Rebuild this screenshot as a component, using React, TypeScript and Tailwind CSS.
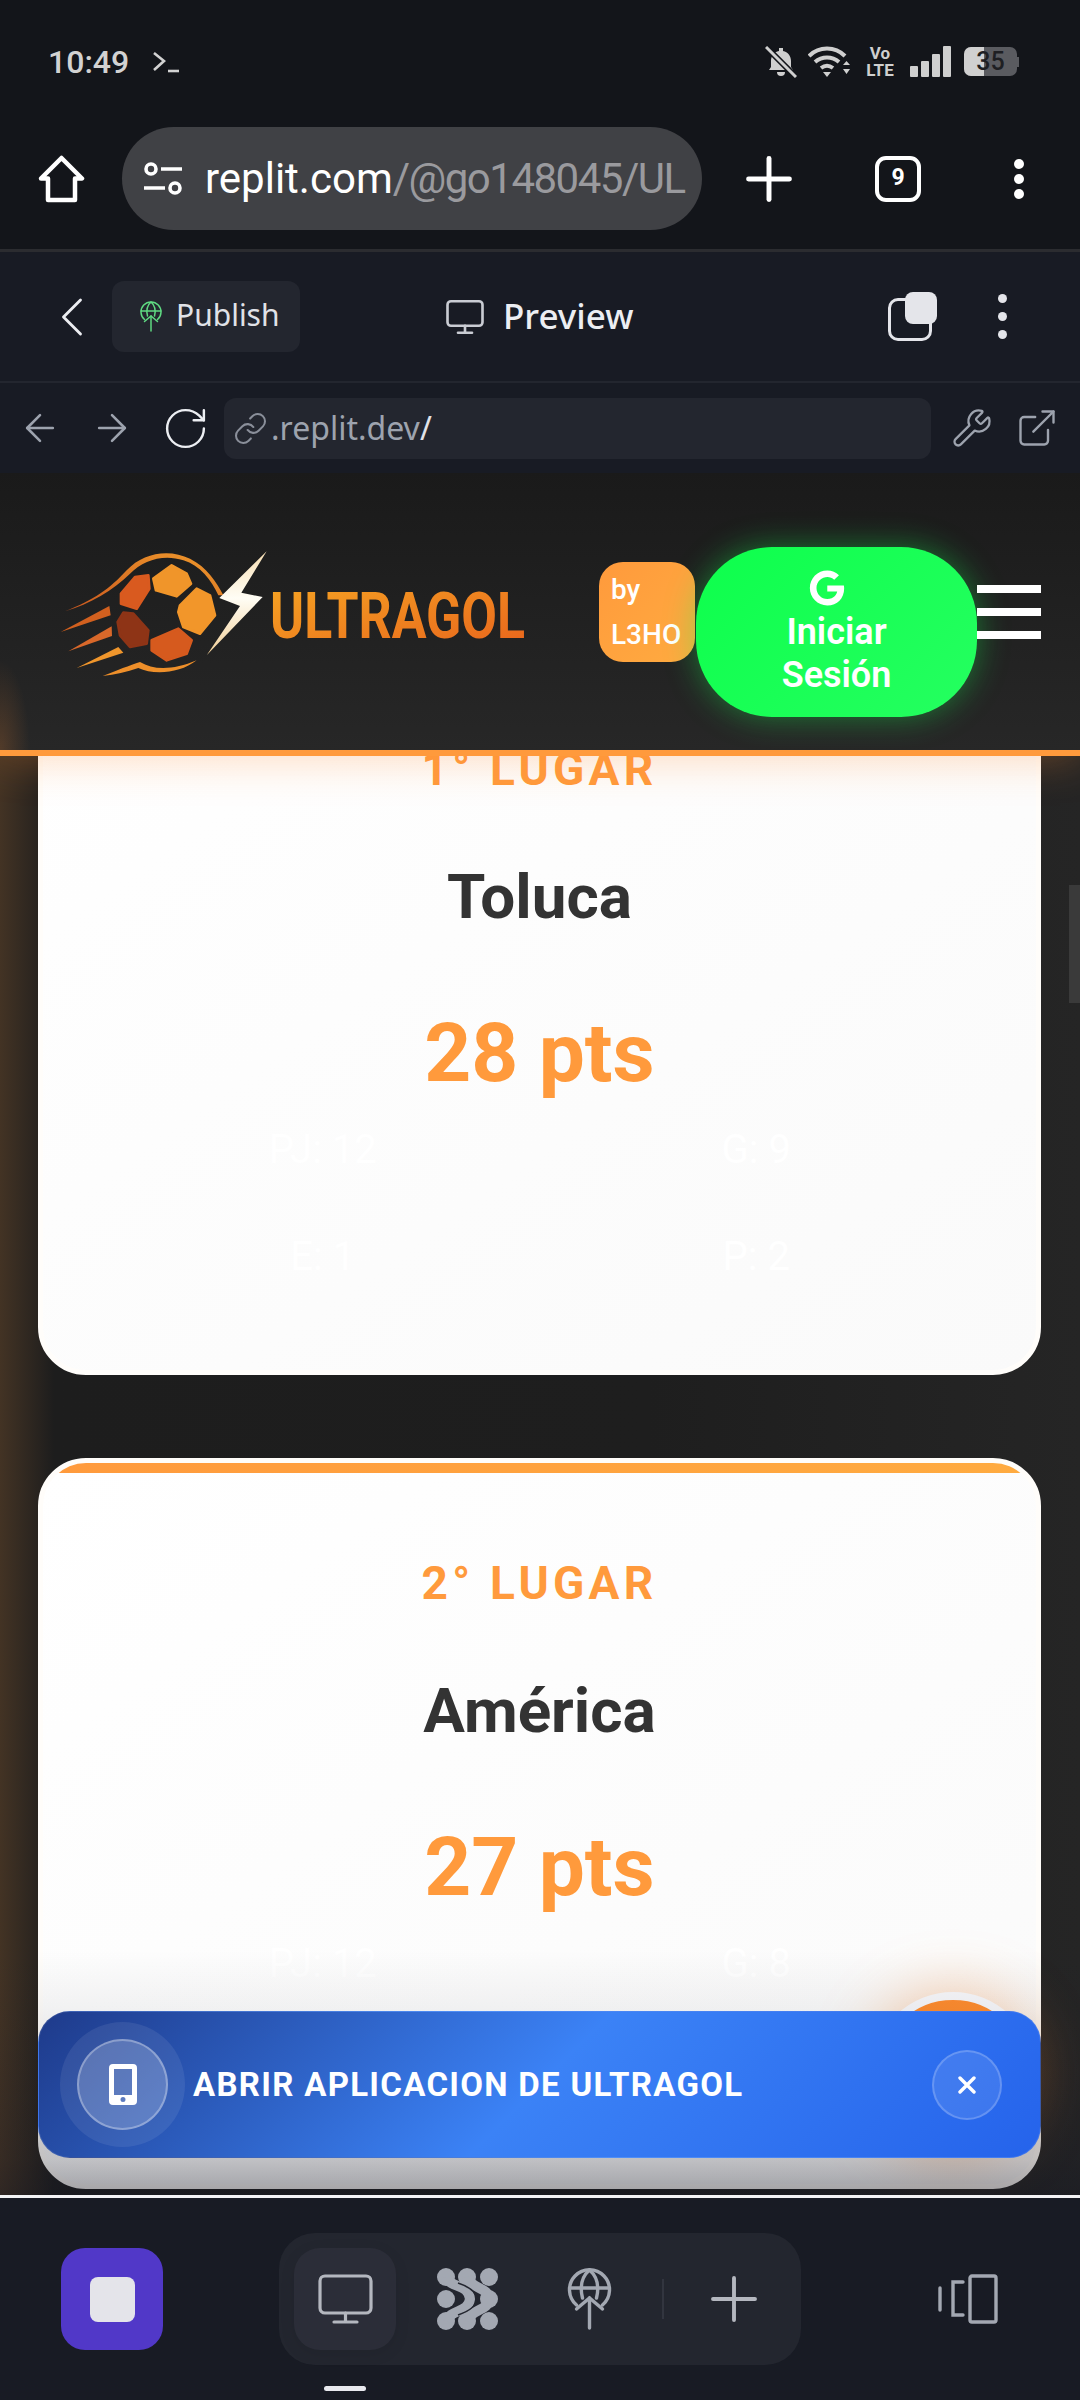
import { ArrowLeft, ArrowRight, ChevronLeft, ExternalLink, Link, Monitor, Plus, RotateCw, Wrench } from "lucide-react";
import { FaGoogle } from "react-icons/fa";

const cards = [
  { place: "1° LUGAR", team: "Toluca", pts: "28 pts", stats: ["PJ: 12", "G: 9", "E: 1", "P: 2"] },
  { place: "2° LUGAR", team: "América", pts: "27 pts", stats: ["PJ: 12", "G: 8"] },
];

function GlobeUp({ color, width, className }: { color: string; width: number; className?: string }) {
  return (
    <svg viewBox="0 0 44 62" className={className} fill="none" stroke={color} strokeWidth={width} strokeLinecap="round">
      <path d="M9 37A20 20 0 1 1 35 37" />
      <path d="M2 20H42" />
      <path d="M15 30C12 18 15 8 22 2C29 8 32 18 29 30" />
      <path d="M22 60V30" />
      <path d="M9 41L22 30L35 41" />
    </svg>
  );
}

function Logo() {
  return (
    <svg viewBox="0 0 1560 480" className="w-[520px] h-[160px] shrink-0">
      <defs>
        <linearGradient id="word" x1="0" y1="0" x2="1" y2="1">
          <stop offset="0" stopColor="#f6a623" />
          <stop offset="1" stopColor="#e8621c" />
        </linearGradient>
        <linearGradient id="arc" x1="0" y1="1" x2="1" y2="0">
          <stop offset="0" stopColor="#c9561e" />
          <stop offset="1" stopColor="#f09a2c" />
        </linearGradient>
        <linearGradient id="bolt" x1="0" y1="0" x2="0" y2="1">
          <stop offset="0" stopColor="#f7dfb4" />
          <stop offset="0.45" stopColor="#fffdf5" />
          <stop offset="1" stopColor="#f2cf97" />
        </linearGradient>
      </defs>
      <path d="M75 238C160 205 210 170 260 115C310 60 390 50 450 80C500 105 530 150 550 190L535 190C515 145 480 100 430 85C370 65 310 85 270 125C220 175 150 215 75 238Z" fill="url(#arc)" />
      <polygon points="62,300 208,222 212,250" fill="#d2601f" />
      <polygon points="85,358 215,283 216,312" fill="#d9682a" />
      <polygon points="110,408 235,345 250,362" fill="#f0962c" />
      <path d="M188 432C230 415 270 400 300 390C340 415 400 415 470 385C420 425 340 430 295 408C260 420 225 428 188 432Z" fill="#ee8f2a" />
      <g strokeWidth="8" strokeLinejoin="round">
        <polygon points="340,140 395,100 440,125 453,155 410,193 348,175" fill="#f0952a" stroke="#f0952a" />
        <polygon points="420,220 470,170 510,190 525,250 480,305 430,285 415,240" fill="#f2962a" stroke="#f2962a" />
        <polygon points="243,185 285,135 325,130 328,170 290,230 243,215" fill="#d95a1f" stroke="#d95a1f" />
        <polygon points="233,270 250,242 280,245 325,295 320,335 270,345 240,310" fill="#8e3416" stroke="#8e3416" />
        <polygon points="335,325 415,290 455,325 440,365 380,385 335,355" fill="#d65a1e" stroke="#d65a1e" />
      </g>
      <polygon points="680,58 538,198 600,222 500,370 668,195 604,182" fill="url(#bolt)" />
      <text x="690" y="318" fontFamily="Roboto, sans-serif" fontWeight="700" fontSize="194" textLength="765" lengthAdjust="spacingAndGlyphs" fill="url(#word)">ULTRAGOL</text>
    </svg>
  );
}

function StatusBar() {
  return (
    <div className="h-[127px] flex items-center justify-between pl-[48px] pr-[61px] pb-[4px]">
      <div className="flex items-center gap-[23px] font-['Roboto',sans-serif] font-medium text-[32px] text-[#d2d2d2]">
        <span>10:49</span>
        <svg viewBox="0 0 28 22" className="w-[28px] h-[22px]" fill="none" stroke="#d2d2d2" strokeWidth="2.6">
          <path d="M2 2L12 10L2 19" />
          <path d="M16 20H27" />
        </svg>
      </div>
      <div className="flex items-center">
        <svg viewBox="0 0 32 32" className="w-[32px] h-[32px]" fill="#cfcfcf">
          <path d="M14 2h4v3c5 1 8 5 8 10v6l2 3H4l2-3v-6c0-5 3-9 8-10Z" />
          <path d="M12 26h8a4 4 0 0 1-8 0Z" />
          <path d="M1 1L31 31" stroke="#13151a" strokeWidth="6" />
          <path d="M1 1L31 31" stroke="#cfcfcf" strokeWidth="3" />
        </svg>
        <svg viewBox="0 0 42 32" className="w-[42px] h-[32px] ml-[11px]" fill="none" stroke="#cfcfcf" strokeWidth="4">
          <path d="M1 10C11 0 27 0 37 10" />
          <path d="M7 16C14 10 24 10 31 16" />
          <path d="M13 22C17 19 21 19 25 22" />
          <path d="M15 26L23 26L19 31Z" fill="#cfcfcf" stroke="none" />
          <path d="M35 19L42 19L38.5 15Z M35 23L42 23L38.5 28Z" fill="#cfcfcf" stroke="none" />
        </svg>
        <div className="w-[28px] ml-[16px] flex flex-col items-center font-['Roboto',sans-serif] font-bold text-[#cfcfcf] text-[17px] leading-[17px]">
          <span>Vo</span>
          <span>LTE</span>
        </div>
        <div className="flex items-end gap-[3px] h-[31px] ml-[16px]">
          <div className="w-[8px] h-[11px] bg-[#cfcfcf] rounded-[1px]" />
          <div className="w-[8px] h-[16px] bg-[#cfcfcf] rounded-[1px]" />
          <div className="w-[8px] h-[23px] bg-[#cfcfcf] rounded-[1px]" />
          <div className="w-[8px] h-[31px] bg-[#cfcfcf] rounded-[1px]" />
        </div>
        <div className="relative w-[53px] h-[29px] ml-[13px] rounded-[7px] overflow-hidden bg-[#5a5b60] flex items-center justify-center">
          <div className="absolute left-0 top-0 h-full w-[20px] bg-[#d0d0d0]" />
          <span className="relative font-['Roboto',sans-serif] font-medium text-[25px] leading-none text-[#1e1f23]">35</span>
        </div>
        <div className="w-[2px] h-[10px] bg-[#5a5b60]" />
      </div>
    </div>
  );
}

function ChromeBar() {
  return (
    <div className="flex items-center pl-[38px] pr-[56px]">
      <svg viewBox="0 0 47 48" className="w-[47px] h-[48px]" fill="none" stroke="#fff" strokeWidth="4.5" strokeLinejoin="round">
        <path d="M23.5 3L44 23.5H37V45H10V23.5H3Z" />
      </svg>
      <div className="w-[580px] h-[103px] ml-[37px] rounded-[52px] bg-[#404145] flex items-center pl-[21px] overflow-hidden whitespace-nowrap">
        <svg viewBox="0 0 40 34" className="w-[40px] h-[34px] shrink-0" fill="none" stroke="#fff" strokeWidth="3.6">
          <circle cx="8" cy="7" r="5" />
          <path d="M18 7H39" />
          <path d="M1 26H22" />
          <circle cx="32" cy="26" r="5" />
        </svg>
        <span className="ml-[22px] font-['Roboto',sans-serif] text-[42px] text-white">
          replit.com<span className="text-[#9a9a9e] tracking-[-1.5px]">/@go148045/UL</span>
        </span>
      </div>
      <Plus className="w-[70px] h-[70px] ml-[32px] text-white" strokeWidth={1.7} />
      <div className="w-[46px] h-[46px] ml-[71px] rounded-[11px] border-[4px] border-white flex items-center justify-center font-['Roboto',sans-serif] font-bold text-[23px] text-white">
        9
      </div>
      <div className="ml-auto flex flex-col gap-[5px]">
        <div className="w-[10px] h-[10px] rounded-full bg-white" />
        <div className="w-[10px] h-[10px] rounded-full bg-white" />
        <div className="w-[10px] h-[10px] rounded-full bg-white" />
      </div>
    </div>
  );
}

function ReplitBar() {
  return (
    <div className="h-[132px] shrink-0 border-t-[3px] border-[#2b2c30] bg-[#181b24] flex items-center pr-[73px]">
      <ChevronLeft className="w-[68px] h-[68px] ml-[38px] text-[#eceef2]" strokeWidth={1} />
      <div className="w-[188px] h-[71px] ml-[6px] -mt-[1px] rounded-[12px] bg-[#23262f] flex items-center pl-[27px]">
        <GlobeUp color="#5fd982" width={3} className="w-[24px] h-[31px]" />
        <span className="ml-[13px] -mt-[3px] font-['Noto_Sans',sans-serif] text-[30px] text-[#e0e2e8]">Publish</span>
      </div>
      <Monitor className="w-[42px] h-[42px] ml-[144px] text-[#c9ccd3]" strokeWidth={1.5} />
      <span className="ml-[17px] font-['Noto_Sans',sans-serif] font-medium text-[35px] text-[#eceef2]">Preview</span>
      <div className="relative w-[49px] h-[49px] ml-auto">
        <div className="absolute left-0 bottom-0 w-[44px] h-[43px] rounded-[10px] border-[3px] border-[#e4e5ea]" />
        <div className="absolute right-0 top-0 w-[32px] h-[32px] rounded-[8px] bg-[#e4e5ea]" />
      </div>
      <div className="ml-[61px] flex flex-col gap-[9px]">
        <div className="w-[9px] h-[9px] rounded-full bg-[#e4e5ea]" />
        <div className="w-[9px] h-[9px] rounded-full bg-[#e4e5ea]" />
        <div className="w-[9px] h-[9px] rounded-full bg-[#e4e5ea]" />
      </div>
    </div>
  );
}

function UrlBar() {
  return (
    <div className="h-[92px] shrink-0 border-t-[2px] border-[#23262f] bg-[#181b24] flex items-center">
      <ArrowLeft className="w-[44px] h-[44px] ml-[18px] text-[#9da3ae]" strokeWidth={1.4} />
      <ArrowRight className="w-[44px] h-[44px] ml-[28px] text-[#9da3ae]" strokeWidth={1.4} />
      <RotateCw className="w-[49px] h-[49px] ml-[27px] text-[#eceef2]" strokeWidth={1.2} />
      <div className="w-[707px] h-[61px] ml-[14px] rounded-[12px] bg-[#23262f] flex items-center pl-[9px]">
        <Link className="w-[35px] h-[35px] text-[#8a8f9a]" strokeWidth={1.4} />
        <span className="ml-[3px] font-['Noto_Sans',sans-serif] text-[32px] text-[#9da3ae]">
          .replit.dev<span className="text-[#e0e2e8]">/</span>
        </span>
      </div>
      <Wrench className="w-[42px] h-[42px] ml-[20px] text-[#9da3ae]" strokeWidth={1.3} />
      <ExternalLink className="w-[44px] h-[44px] ml-[22px] text-[#9da3ae]" strokeWidth={1.3} />
    </div>
  );
}

function SiteHeader() {
  return (
    <div className="relative z-10 shrink-0 h-[283px] border-b-[6px] border-[#ff9a3c] bg-[radial-gradient(ellipse_30px_90px_at_0_100%,rgba(255,140,50,0.2),transparent),linear-gradient(180deg,#1a1a1a,#272727)] shadow-[0_4px_40px_rgba(255,140,50,0.3)] flex items-center pl-[40px]">
      <Logo />
      <div className="w-[96px] h-[100px] ml-[39px] rounded-[24px] bg-[linear-gradient(135deg,#ff9a3c,#ffab40)] pl-[12px] flex flex-col justify-center font-['Roboto',sans-serif] font-medium text-[28px] leading-[45px] text-white">
        <span>by</span>
        <span>L3HO</span>
      </div>
      <div className="w-[281px] h-[170px] ml-[1px] mt-[41px] pt-[3px] rounded-[76px] bg-[linear-gradient(135deg,#0dff4c,#25ff60)] shadow-[0_0_32px_rgba(20,255,80,0.4)] flex flex-col items-center justify-center font-['Roboto',sans-serif] font-semibold text-[36px] leading-[43px] text-white">
        <FaGoogle className="w-[36px] h-[36px] -ml-[20px] mb-[5px]" />
        <span>Iniciar</span>
        <span>Sesión</span>
      </div>
      <div className="flex flex-col gap-[15px]">
        <div className="w-[64px] h-[8px] bg-white" />
        <div className="w-[64px] h-[8px] bg-white" />
        <div className="w-[64px] h-[8px] bg-white" />
      </div>
    </div>
  );
}

function Card({ place, team, pts, stats }: (typeof cards)[number]) {
  return (
    <div className="w-[1003px] h-[731px] shrink-0 ml-[38px] rounded-[48px] border-[5px] border-[#fffdfa] overflow-hidden bg-[linear-gradient(145deg,#ffffff,#fafafa)] text-center font-['Roboto',sans-serif]">
      <div className="h-[10px] bg-[linear-gradient(90deg,#ff9a3c,#ffab40)]" />
      <div className="mt-[80px] text-[46px] leading-[60px] font-bold tracking-[4.25px] text-[#ff9a3c]">{place}</div>
      <div className="mt-[58px] text-[62px] leading-[80px] font-bold text-[#333333]">{team}</div>
      <div className="mt-[66px] text-[82px] leading-[100px] font-bold text-[#ff9a3c]">{pts}</div>
      <div className="mt-[22px] px-[63px] grid grid-cols-2 gap-y-[57px] text-[40px] leading-[50px] text-white">
        {stats.map((s) => (
          <div key={s}>{s}</div>
        ))}
      </div>
    </div>
  );
}

function AppBanner() {
  return (
    <div className="absolute left-[38px] top-[1538px] z-10 w-[1003px] h-[147px] rounded-[32px] border border-white/10 bg-[linear-gradient(135deg,#1e3a8a,#3b82f6_50%,#2563eb)] flex items-center pl-[38px] pr-[38px]">
      <div className="w-[91px] h-[91px] shrink-0 rounded-full bg-white/25 border-[2px] border-white/30 shadow-[0_0_0_17px_rgba(255,255,255,0.08)] flex items-center justify-center">
        <svg viewBox="0 0 28 41" className="w-[28px] h-[41px]">
          <path fillRule="evenodd" fill="#fff" d="M4 0H24A4 4 0 0 1 28 4V37A4 4 0 0 1 24 41H4A4 4 0 0 1 0 37V4A4 4 0 0 1 4 0ZM5 5V31H23V5ZM14 33A2.5 2.5 0 1 0 14 38A2.5 2.5 0 1 0 14 33Z" />
        </svg>
      </div>
      <span className="ml-[25px] font-['Roboto',sans-serif] font-bold text-[33px] tracking-[1.3px] text-white whitespace-nowrap">ABRIR APLICACION DE ULTRAGOL</span>
      <div className="ml-auto w-[70px] h-[70px] rounded-full bg-white/10 border-[2px] border-white/20 flex items-center justify-center">
        <svg viewBox="0 0 18 18" className="w-[18px] h-[18px]" stroke="#fff" strokeWidth="3.4" strokeLinecap="round">
          <path d="M2 2L16 16M16 2L2 16" />
        </svg>
      </div>
    </div>
  );
}

function BottomNav() {
  return (
    <div className="h-[205px] shrink-0 border-t-[3px] border-[#f4f4f6] bg-[#181b24] relative">
      <div className="flex items-center pt-[35px]">
        <div className="w-[102px] h-[102px] ml-[61px] rounded-[24px] bg-[#5138c8] flex items-center justify-center">
          <div className="w-[45px] h-[45px] rounded-[8px] bg-[#e4e4ea]" />
        </div>
        <div className="w-[522px] h-[132px] ml-[116px] rounded-[36px] bg-[#23262f] flex items-center pl-[15px]">
          <div className="w-[102px] h-[102px] rounded-[26px] bg-[#2b2d38] shadow-[0_4px_16px_rgba(0,0,0,0.08)] flex items-center justify-center">
            <svg viewBox="0 0 55 50" className="w-[55px] h-[50px]" fill="none" stroke="#b4b7bf" strokeWidth="3.2" strokeLinecap="round">
              <rect x="2" y="2" width="51" height="37" rx="5" />
              <path d="M27.5 39V47M16 48H39" />
            </svg>
          </div>
          <svg viewBox="0 0 61 62" className="w-[61px] h-[62px] ml-[41px]" fill="#a3a8b2">
            <circle cx="9" cy="9" r="9" />
            <circle cx="30" cy="9" r="9" />
            <circle cx="52" cy="9" r="9" />
            <circle cx="9" cy="31" r="9" />
            <circle cx="52" cy="31" r="9" />
            <circle cx="9" cy="53" r="9" />
            <circle cx="30" cy="53" r="9" />
            <circle cx="52" cy="53" r="9" />
            <g fill="none" stroke="#a3a8b2" strokeWidth="10">
              <path d="M9 9C14 21 31 15 33 31C31 45 14 41 9 53" />
              <path d="M30 9C34 21 52 19 52 31C52 43 34 41 30 53" />
            </g>
            <path d="M21 15C33 19 39 24 40 31C39 38 33 43 21 47" fill="none" stroke="#23262f" strokeWidth="1.6" />
          </svg>
          <GlobeUp color="#a3a8b2" width={3.4} className="w-[45px] h-[62px] ml-[69px]" />
          <div className="w-[2px] h-[40px] ml-[50px] bg-[#32353f]" />
          <Plus className="w-[72px] h-[72px] ml-[34px] text-[#b4b7bf]" strokeWidth={1.3} />
        </div>
        <svg viewBox="0 0 60 50" className="w-[60px] h-[50px] ml-[137px]" fill="none" stroke="#a3a8b2" strokeWidth="3.4" strokeLinecap="round">
          <rect x="32" y="2" width="26" height="46" rx="2" />
          <path d="M25 8H15V41H25" />
          <path d="M2 14V36" />
        </svg>
      </div>
      <div className="absolute left-[324px] top-[188px] w-[42px] h-[5px] rounded-full bg-[#e8e9ee]" />
    </div>
  );
}

export default function App() {
  return (
    <div className="w-[1080px] h-[2400px] flex flex-col overflow-hidden bg-[#13151a]">
      <div className="h-[249px] shrink-0 bg-[#13151a]">
        <StatusBar />
        <ChromeBar />
      </div>
      <ReplitBar />
      <UrlBar />
      <div className="relative flex-1 min-h-0 flex flex-col overflow-hidden bg-[linear-gradient(90deg,#433324,#1d1d1d_5%,#1e1e1e_60%,#252525)]">
        <SiteHeader />
        <div className="flex-1 min-h-0 overflow-hidden">
          <div className="-mt-[112px] flex flex-col gap-[83px]">
            {cards.map((c) => (
              <Card key={c.team} {...c} />
            ))}
          </div>
        </div>
        <div className="absolute right-0 top-[412px] w-[11px] h-[118px] bg-[#3a3a3a]" />
        <div className="absolute left-[871px] top-[1519px] w-[164px] h-[164px] rounded-full border-[8px] border-[#f7f7fa] bg-[#ff8c2e] shadow-[0_0_60px_rgba(255,140,50,0.4)]" />
        <div className="absolute left-0 bottom-0 w-full h-[245px] bg-[linear-gradient(to_top,rgba(20,22,35,0.4),rgba(20,22,35,0.26)_35px,rgba(20,22,35,0.05)_185px,rgba(20,22,35,0))]" />
        <AppBanner />
      </div>
      <BottomNav />
    </div>
  );
}
